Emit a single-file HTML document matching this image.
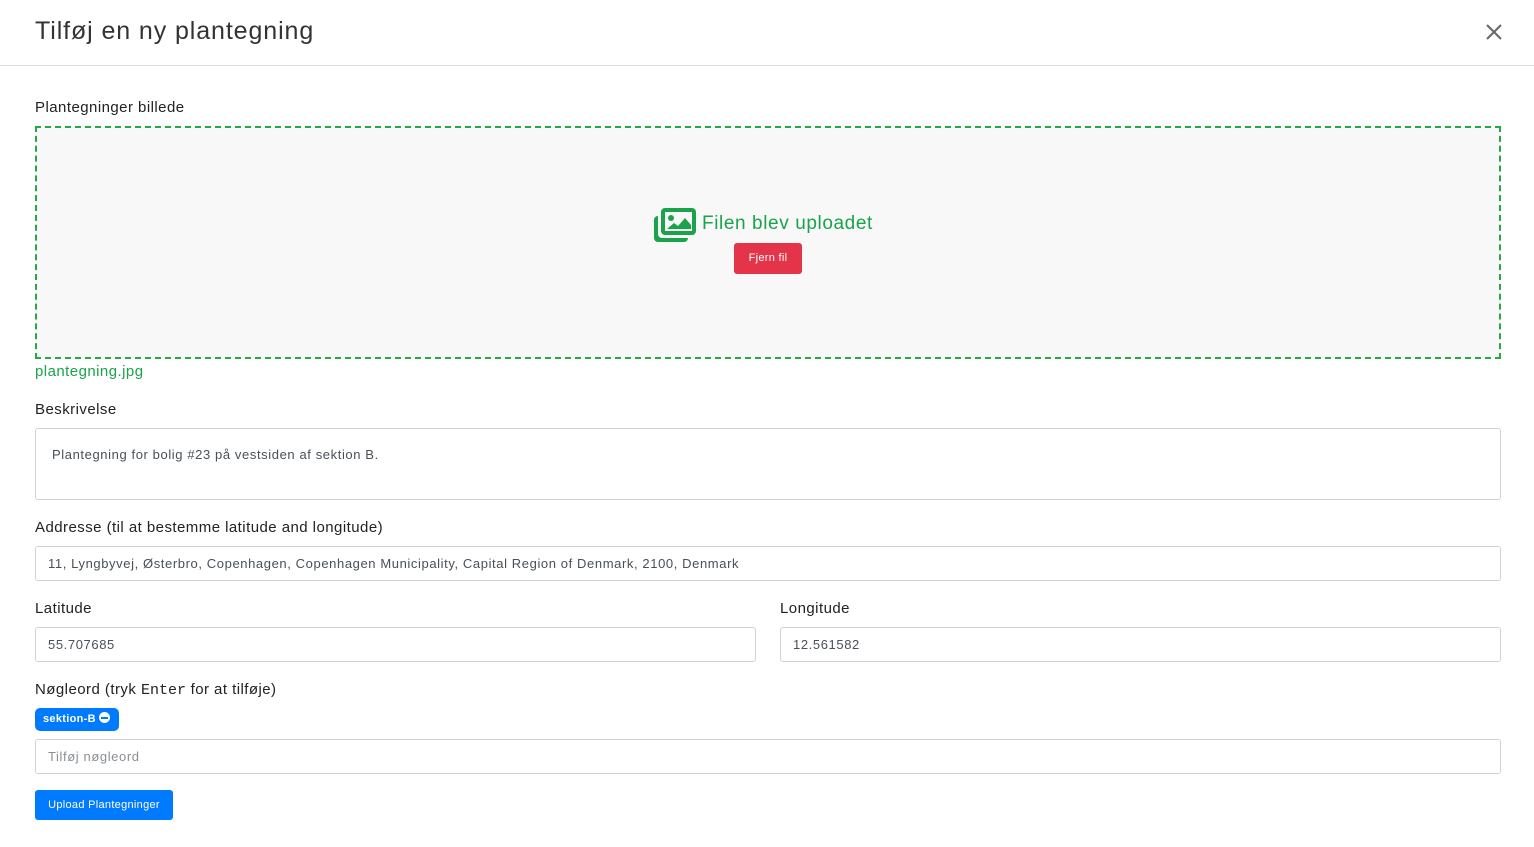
<!DOCTYPE html>
<html><head><meta charset="utf-8"><style>
*{box-sizing:border-box}
body{margin:0;width:1534px;height:847px;background:#fff;font-family:"Liberation Sans",sans-serif;color:#212529;overflow:hidden}
.hdr{height:66px;border-bottom:1px solid #dee2e6;position:relative}
.hdr h1{margin:0;position:absolute;left:35px;top:17px;font-size:25px;font-weight:400;color:#333;letter-spacing:0.9px}
.x{position:absolute;right:32px;top:24px}
.lbl{position:absolute;left:35px;font-size:15px;color:#222;letter-spacing:0.45px}
.inp{position:absolute;border:1px solid #ced4da;border-radius:3px;height:35px;font-size:13px;color:#495057;padding-left:12px;line-height:33px;letter-spacing:0.6px}
.drop{position:absolute;left:35px;top:126px;width:1466px;height:233px;border:2px dashed #28a745;background:#f8f8f8}
</style></head><body>
<div class="hdr"><h1>Tilføj en ny plantegning</h1>
<svg class="x" width="16" height="16" viewBox="0 0 16 16"><path d="M1 1L15 15M15 1L1 15" stroke="#666" stroke-width="2"/></svg></div>
<div class="lbl" style="top:99px">Plantegninger billede</div>
<div class="drop">
<svg style="position:absolute;left:617px;top:80px" width="42" height="34" viewBox="0 0 42 34"><rect x="0" y="8" width="34" height="26" rx="4" fill="#1aa34a"/><rect x="4" y="4" width="34" height="26" rx="4" fill="#f8f8f8"/><rect x="7" y="0" width="35" height="27" rx="4" fill="#1aa34a"/><rect x="11" y="4" width="27" height="19" fill="#f8f8f8"/><circle cx="17" cy="10" r="3" fill="#1aa34a"/><path d="M13 21L20 15L24 18L31 10L37 17V21Z" fill="#1aa34a"/></svg>
<div style="position:absolute;left:665px;top:85px;font-size:19px;color:#1aa34a;letter-spacing:0.6px">Filen blev uploadet</div>
<div style="position:absolute;left:697px;top:115px;width:68px;height:31px;background:#e3344a;border-radius:3px;color:#fff;font-size:11px;text-align:center;line-height:31px;letter-spacing:0.3px">Fjern fil</div>
</div>
<div class="lbl" style="top:363px;color:#1aa34a">plantegning.jpg</div>
<div class="lbl" style="top:401px">Beskrivelse</div>
<div class="inp" style="left:35px;top:428px;width:1466px;height:72px;padding-left:16px;line-height:52px">Plantegning for bolig #23 på vestsiden af sektion B.</div>
<div class="lbl" style="top:519px">Addresse (til at bestemme latitude and longitude)</div>
<div class="inp" style="left:35px;top:546px;width:1466px">11, Lyngbyvej, Østerbro, Copenhagen, Copenhagen Municipality, Capital Region of Denmark, 2100, Denmark</div>
<div class="lbl" style="top:600px">Latitude</div>
<div class="lbl" style="top:600px;left:780px">Longitude</div>
<div class="inp" style="left:35px;top:627px;width:721px">55.707685</div>
<div class="inp" style="left:780px;top:627px;width:721px">12.561582</div>
<div class="lbl" style="top:681px">Nøgleord (tryk <span style="font-family:'Liberation Mono',monospace;letter-spacing:0">Enter</span> for at tilføje)</div>
<div style="position:absolute;left:35px;top:708px;width:84px;height:23px;background:#007bff;border-radius:5px;color:#fff;font-size:11px;font-weight:bold;line-height:23px;padding-left:8px;letter-spacing:0.3px">sektion-B <span style="display:inline-block;width:11px;height:11px;border-radius:50%;background:#fff;vertical-align:-1px;position:relative"><span style="position:absolute;left:2px;top:4.5px;width:7px;height:2px;background:#007bff"></span></span></div>
<div class="inp" style="left:35px;top:739px;width:1466px;color:#8a8f94">Tilføj nøgleord</div>
<div style="position:absolute;left:35px;top:790px;width:138px;height:30px;background:#007bff;border-radius:3px;color:#fff;font-size:11px;text-align:center;line-height:30px;letter-spacing:0.3px">Upload Plantegninger</div>
</body></html>
